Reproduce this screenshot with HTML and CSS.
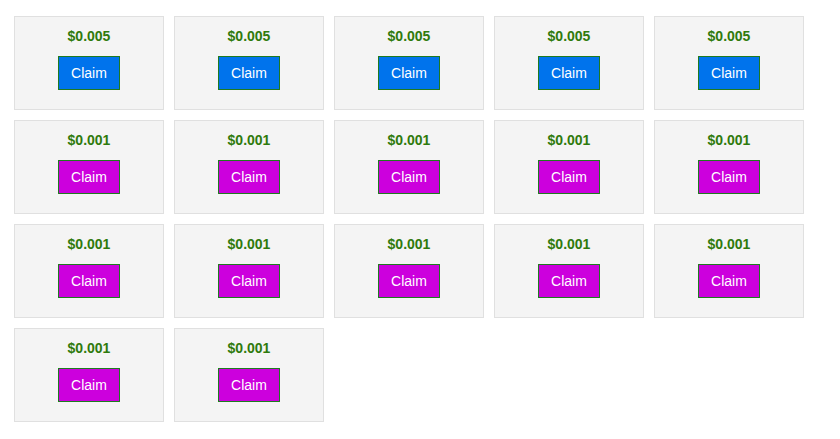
FILE: index.html
```html
<!DOCTYPE html>
<html>
<head>
<meta charset="utf-8">
<link rel="stylesheet" href="styles.css">
</head>
<body>
<div class="grid">
  <div class="card"><div class="price">$0.005</div><button class="claim blue">Claim</button></div>
  <div class="card"><div class="price">$0.005</div><button class="claim blue">Claim</button></div>
  <div class="card"><div class="price">$0.005</div><button class="claim blue">Claim</button></div>
  <div class="card"><div class="price">$0.005</div><button class="claim blue">Claim</button></div>
  <div class="card"><div class="price">$0.005</div><button class="claim blue">Claim</button></div>
  <div class="card"><div class="price">$0.001</div><button class="claim purple">Claim</button></div>
  <div class="card"><div class="price">$0.001</div><button class="claim purple">Claim</button></div>
  <div class="card"><div class="price">$0.001</div><button class="claim purple">Claim</button></div>
  <div class="card"><div class="price">$0.001</div><button class="claim purple">Claim</button></div>
  <div class="card"><div class="price">$0.001</div><button class="claim purple">Claim</button></div>
  <div class="card"><div class="price">$0.001</div><button class="claim purple">Claim</button></div>
  <div class="card"><div class="price">$0.001</div><button class="claim purple">Claim</button></div>
  <div class="card"><div class="price">$0.001</div><button class="claim purple">Claim</button></div>
  <div class="card"><div class="price">$0.001</div><button class="claim purple">Claim</button></div>
  <div class="card"><div class="price">$0.001</div><button class="claim purple">Claim</button></div>
  <div class="card"><div class="price">$0.001</div><button class="claim purple">Claim</button></div>
  <div class="card"><div class="price">$0.001</div><button class="claim purple">Claim</button></div>
</div>
</body>
</html>
```
FILE: styles.css
```css
html, body {
  margin: 0;
  padding: 0;
  background: #ffffff;
  font-family: "Liberation Sans", Arial, sans-serif;
}
.grid {
  display: grid;
  grid-template-columns: repeat(5, 150px);
  gap: 10px;
  padding: 16px 0 0 14px;
}
.card {
  box-sizing: border-box;
  height: 94px;
  background: #f4f4f4;
  border: 1px solid #e0e0e0;
  padding-top: 11px;
  display: flex;
  flex-direction: column;
  align-items: center;
}
.price {
  font-size: 14px;
  line-height: 16px;
  font-weight: bold;
  color: #2f7a0c;
  margin-bottom: 12px;
}
.claim {
  box-sizing: border-box;
  width: 62px;
  height: 34px;
  border: 1px solid #1f7a1f;
  color: #ffffff;
  font-family: "Liberation Sans", Arial, sans-serif;
  font-size: 14px;
  line-height: 16px;
  padding: 0;
  margin: 0;
  cursor: pointer;
}
.blue { background: #0073ec; }
.purple { background: #cc00dd; }
```
